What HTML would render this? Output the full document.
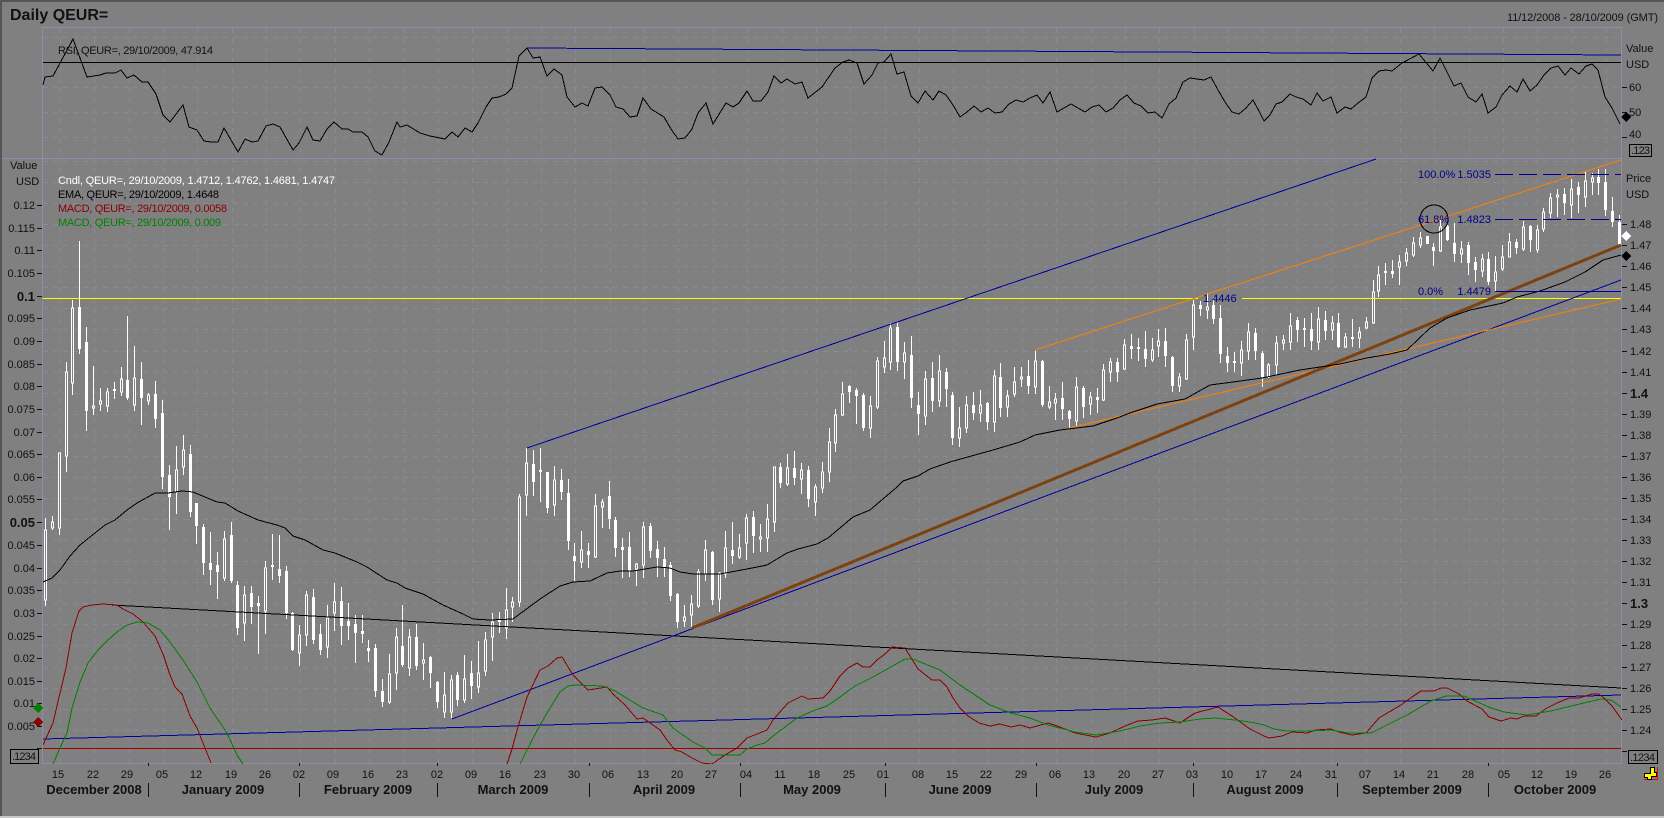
<!DOCTYPE html>
<html><head><meta charset="utf-8"><title>Daily QEUR=</title>
<style>
html,body{margin:0;padding:0;background:#808080;width:1664px;height:818px;overflow:hidden}
svg{display:block}
text{font-family:"Liberation Sans",Arial,sans-serif;font-size:11px;fill:#111}
.b{font-weight:bold;font-size:13px}
.m{text-anchor:middle}
.e{text-anchor:end}
.n{font-size:11px;fill:#00008b}
</style></head><body>
<svg xmlns="http://www.w3.org/2000/svg" width="1664" height="818" viewBox="0 0 1664 818">
<defs><clipPath id="c"><rect x="43" y="28" width="1579" height="736"/></clipPath></defs>
<rect width="1664" height="818" fill="#808080"/>
<g shape-rendering="crispEdges" fill="none">
<path stroke="#555" stroke-width="2" d="M0 1H1664M1 0V818"/>
<path stroke="#c8c8c8" stroke-width="2" d="M0 817H1664"/>
<path stroke="#8a889c" stroke-dasharray="5 5" d="M60.5 28V763M94.5 28V763M129.5 28V763M163.5 28V763M197.5 28V763M232.5 28V763M266.5 28V763M300.5 28V763M335.5 28V763M369.5 28V763M404.5 28V763M438.5 28V763M472.5 28V763M507.5 28V763M541.5 28V763M575.5 28V763M610.5 28V763M644.5 28V763M678.5 28V763M713.5 28V763M747.5 28V763M782.5 28V763M816.5 28V763M850.5 28V763M885.5 28V763M919.5 28V763M953.5 28V763M988.5 28V763M1022.5 28V763M1056.5 28V763M1091.5 28V763M1125.5 28V763M1159.5 28V763M1194.5 28V763M1228.5 28V763M1262.5 28V763M1297.5 28V763M1331.5 28V763M1366.5 28V763M1400.5 28V763M1434.5 28V763M1469.5 28V763M1503.5 28V763M1537.5 28V763M1572.5 28V763M1606.5 28V763"/>
<path stroke="#8a889c" stroke-dasharray="5 5" d="M43 37.5H1621M43 87.5H1621M43 112.5H1621M43 137.5H1621M43 161.5H1621M43 182.5H1621M43 203.5H1621M43 224.5H1621M43 245.5H1621M43 266.5H1621M43 287.5H1621M43 308.5H1621M43 329.5H1621M43 351.5H1621M43 372.5H1621M43 393.5H1621M43 414.5H1621M43 435.5H1621M43 456.5H1621M43 477.5H1621M43 498.5H1621M43 519.5H1621M43 540.5H1621M43 561.5H1621M43 582.5H1621M43 603.5H1621M43 624.5H1621M43 645.5H1621M43 667.5H1621M43 688.5H1621M43 709.5H1621M43 730.5H1621"/>
<path stroke="#8f8dab" d="M42.5 27.5H1621.5V763.5H42.5ZM2 158.5H1621.5"/>
<!-- axis ticks -->
<path stroke="#111" d="M37 205.5h5M37 228.5h5M37 250.5h5M37 273.5h5M37 296.5h5M37 318.5h5M37 341.5h5M37 364.5h5M37 386.5h5M37 409.5h5M37 432.5h5M37 454.5h5M37 477.5h5M37 499.5h5M37 522.5h5M37 545.5h5M37 568.5h5M37 590.5h5M37 613.5h5M37 636.5h5M37 658.5h5M37 681.5h5M37 703.5h5M37 726.5h5M37 748.5h5"/>
<path stroke="#111" d="M1622 87.5h5M1622 112.5h5M1622 137.5h5M1622 224.5h5M1622 245.5h5M1622 266.5h5M1622 287.5h5M1622 308.5h5M1622 329.5h5M1622 351.5h5M1622 372.5h5M1622 393.5h5M1622 414.5h5M1622 435.5h5M1622 456.5h5M1622 477.5h5M1622 498.5h5M1622 519.5h5M1622 540.5h5M1622 561.5h5M1622 582.5h5M1622 603.5h5M1622 624.5h5M1622 645.5h5M1622 667.5h5M1622 688.5h5M1622 709.5h5M1622 730.5h5M1622 751.5h5"/>
<path stroke="#111" d="M148.5 763v3M299.5 763v3M437.5 763v3M589.5 763v3M740.5 763v3M885.5 763v3M1036.5 763v3M1193.5 763v3M1337.5 763v3M1488.5 763v3"/>
<path stroke="#111" d="M148.5 783V797M299.5 783V797M437.5 783V797M589.5 783V797M740.5 783V797M885.5 783V797M1036.5 783V797M1193.5 783V797M1337.5 783V797M1488.5 783V797"/>
<!-- candle wicks -->
<path stroke="#fff" d="M45.5 518V606M52.5 516V530M59.5 453V535M66.5 362V472M72.5 300V395M79.5 241V354M86.5 327V431M93.5 366V415M100.5 388V411M107.5 388V412M114.5 382V399M121.5 367V396M127.5 316V400M134.5 346V411M141.5 362V425M148.5 393V405M155.5 381V428M162.5 400V489M169.5 465V530M176.5 446V514M183.5 435V475M190.5 445V517M196.5 503V544M203.5 524V575M210.5 532V585M217.5 552V599M224.5 531V581M231.5 522V583M237.5 581V635M244.5 586V641M251.5 586V624M258.5 596V654M265.5 561V634M272.5 534V580M279.5 535V583M286.5 566V619M292.5 612V651M299.5 625V666M306.5 591V646M313.5 589V644M320.5 624V655M327.5 605V658M334.5 583V631M341.5 587V645M348.5 603V640M355.5 615V663M362.5 615V643M368.5 640V662M375.5 644V697M382.5 679V707M389.5 654V704M396.5 628V690M402.5 605V667M409.5 629V676M416.5 624V670M423.5 643V680M430.5 656V688M437.5 681V708M444.5 672V718M451.5 675V718M457.5 672V706M464.5 655V703M471.5 661V699M478.5 641V693M485.5 632V676M492.5 613V661M499.5 612V633M506.5 588V639M512.5 597V622M519.5 494V607M526.5 448V516M533.5 450V496M540.5 448V502M547.5 472V513M554.5 466V516M561.5 469V500M568.5 479V550M574.5 543V581M581.5 531V568M588.5 543V568M595.5 494V558M602.5 499V528M609.5 481V529M615.5 517V557M622.5 538V578M629.5 532V577M636.5 563V586M643.5 522V578M650.5 523V558M657.5 541V577M664.5 547V577M670.5 562V601M677.5 593V628M684.5 605V627M691.5 595V627M698.5 569V608M705.5 540V581M712.5 551V605M719.5 572V612M725.5 531V578M732.5 522V564M739.5 534V559M746.5 514V560M753.5 511V553M760.5 524V552M767.5 504V552M774.5 467V532M780.5 463V488M787.5 454V486M794.5 451V485M801.5 463V494M808.5 466V507M815.5 484V516M822.5 462V493M829.5 428V482M835.5 409V452M842.5 382V416M849.5 385V403M856.5 388V424M863.5 393V431M870.5 396V438M877.5 357V409M884.5 341V373M890.5 323V370M897.5 322V371M904.5 342V379M911.5 336V408M918.5 392V435M925.5 371V425M932.5 362V412M939.5 355V407M946.5 368V407M952.5 392V445M959.5 407V447M966.5 396V433M973.5 392V420M980.5 390V422M987.5 402V430M994.5 370V432M1000.5 363V417M1007.5 390V417M1014.5 367V397M1021.5 367V387M1028.5 360V394M1035.5 351V394M1042.5 360V407M1049.5 386V409M1055.5 393V420M1062.5 382V420M1069.5 410V428M1076.5 377V426M1083.5 386V418M1090.5 392V415M1097.5 388V413M1103.5 364V401M1110.5 358V382M1117.5 358V382M1124.5 339V370M1131.5 334V359M1138.5 338V361M1145.5 331V367M1152.5 338V362M1158.5 329V357M1165.5 328V367M1172.5 356V392M1179.5 373V392M1186.5 334V380M1193.5 300V350M1200.5 301V316M1207.5 293V319M1213.5 297V324M1220.5 305V363M1227.5 347V372M1234.5 352V372M1241.5 341V376M1248.5 323V360M1255.5 328V360M1262.5 351V387M1268.5 363V378M1276.5 336V375M1283.5 335V350M1290.5 313V350M1297.5 317V342M1304.5 318V347M1311.5 313V350M1318.5 307V350M1325.5 311V340M1332.5 316V340M1338.5 313V348M1345.5 333V348M1352.5 319V347M1359.5 327V348M1366.5 317V329M1373.5 280V324M1378.5 266V297M1385.5 263V285M1392.5 260V278M1399.5 255V285M1406.5 248V266M1413.5 237V257M1420.5 232V248M1427.5 236V244M1433.5 243V266M1440.5 220V252M1447.5 225V241M1454.5 223V262M1461.5 241V263M1468.5 242V275M1475.5 257V282M1482.5 254V277M1488.5 252V285M1495.5 256V292M1502.5 245V271M1509.5 233V257M1516.5 239V254M1523.5 221V251M1530.5 225V252M1537.5 225V253M1543.5 208V232M1550.5 193V218M1557.5 189V217M1564.5 188V215M1571.5 179V218M1578.5 182V213M1585.5 172V207M1592.5 173V195M1598.5 169V195M1605.5 169V216M1612.5 197V227M1619.5 215V247"/>
<!-- filled bodies -->
<path stroke="#fff" stroke-width="3" d="M79.5 307V349M86.5 342V411M114.5 389V391M127.5 380V398M141.5 379V398M155.5 394V419M162.5 413V477M169.5 475V497M190.5 454V512M196.5 503V526M203.5 527V563M210.5 563V570M217.5 565V572M231.5 535V581M237.5 585V628M251.5 593V607M258.5 603V606M272.5 565V567M279.5 569V576M286.5 571V613M292.5 613V650M313.5 597V640M320.5 634V650M341.5 601V626M348.5 621V626M355.5 624V633M362.5 631V634M368.5 648V651M375.5 648V691M382.5 691V702M402.5 646V665M416.5 637V666M430.5 657V673M437.5 682V702M457.5 675V700M471.5 673V686M499.5 620V622M533.5 464V482M540.5 470V472M547.5 472V508M561.5 480V492M568.5 493V541M574.5 556V561M588.5 551V555M609.5 496V519M615.5 520V548M622.5 547V550M629.5 547V571M650.5 526V551M657.5 549V558M664.5 559V567M670.5 565V596M677.5 594V622M712.5 552V600M732.5 550V556M753.5 517V536M780.5 467V483M794.5 468V478M808.5 470V499M849.5 386V392M856.5 390V396M863.5 395V428M897.5 327V362M911.5 355V398M918.5 405V414M932.5 378V401M946.5 372V389M952.5 395V438M973.5 405V413M987.5 403V422M1000.5 377V408M1028.5 376V386M1042.5 361V405M1062.5 398V409M1069.5 411V419M1083.5 388V407M1097.5 397V400M1117.5 362V372M1131.5 346V349M1138.5 347V349M1145.5 349V359M1165.5 341V356M1172.5 357V386M1200.5 305V309M1213.5 305V319M1220.5 318V354M1227.5 356V363M1234.5 361V363M1255.5 333V351M1262.5 353V377M1297.5 320V330M1304.5 328V330M1311.5 329V341M1325.5 320V331M1338.5 323V347M1352.5 337V339M1385.5 271V273M1392.5 271V274M1427.5 236V244M1433.5 247V251M1447.5 226V240M1454.5 243V254M1468.5 245V263M1475.5 262V270M1488.5 259V282M1516.5 242V248M1530.5 226V240M1564.5 194V203M1578.5 187V195M1598.5 177V183M1605.5 182V210M1612.5 211V222M1619.5 222V245"/>
<!-- hollow bodies -->
<path stroke="#fff" fill="#808080" d="M44.5 530h2V600h-2ZM51.5 522h2V528h-2ZM58.5 453h2V528h-2ZM65.5 372h2V456h-2ZM71.5 308h2V383h-2ZM92.5 406h2V408h-2ZM99.5 401h2V404h-2ZM106.5 392h2V406h-2ZM120.5 379h2V392h-2ZM133.5 378h2V405h-2ZM147.5 395h2V401h-2ZM175.5 470h2V492h-2ZM182.5 450h2V467h-2ZM223.5 539h2V578h-2ZM243.5 595h2V623h-2ZM264.5 568h2V611h-2ZM298.5 635h2V653h-2ZM305.5 595h2V635h-2ZM326.5 618h2V647h-2ZM333.5 602h2V613h-2ZM388.5 674h2V702h-2ZM395.5 637h2V673h-2ZM408.5 637h2V668h-2ZM422.5 660h2V663h-2ZM443.5 695h2V712h-2ZM450.5 680h2V712h-2ZM463.5 679h2V700h-2ZM477.5 673h2V687h-2ZM484.5 640h2V671h-2ZM491.5 622h2V637h-2ZM505.5 610h2V628h-2ZM511.5 602h2V607h-2ZM518.5 497h2V602h-2ZM525.5 463h2V495h-2ZM553.5 480h2V505h-2ZM580.5 550h2V562h-2ZM594.5 506h2V557h-2ZM601.5 502h2V507h-2ZM635.5 564h2V569h-2ZM642.5 527h2V565h-2ZM683.5 617h2V621h-2ZM690.5 604h2V615h-2ZM697.5 572h2V606h-2ZM704.5 550h2V574h-2ZM718.5 573h2V599h-2ZM724.5 548h2V574h-2ZM738.5 548h2V557h-2ZM745.5 518h2V543h-2ZM759.5 537h2V539h-2ZM766.5 519h2V538h-2ZM773.5 467h2V522h-2ZM786.5 468h2V484h-2ZM800.5 470h2V479h-2ZM814.5 487h2V502h-2ZM821.5 472h2V488h-2ZM828.5 442h2V472h-2ZM834.5 415h2V443h-2ZM841.5 394h2V415h-2ZM869.5 406h2V428h-2ZM876.5 361h2V407h-2ZM883.5 358h2V367h-2ZM889.5 328h2V362h-2ZM903.5 353h2V362h-2ZM924.5 379h2V416h-2ZM938.5 371h2V401h-2ZM958.5 428h2V438h-2ZM965.5 405h2V428h-2ZM979.5 405h2V413h-2ZM993.5 376h2V422h-2ZM1006.5 396h2V407h-2ZM1013.5 382h2V394h-2ZM1020.5 377h2V379h-2ZM1034.5 361h2V387h-2ZM1048.5 402h2V407h-2ZM1054.5 399h2V403h-2ZM1075.5 387h2V421h-2ZM1089.5 397h2V404h-2ZM1102.5 370h2V400h-2ZM1109.5 362h2V372h-2ZM1123.5 345h2V369h-2ZM1151.5 350h2V360h-2ZM1157.5 341h2V346h-2ZM1178.5 377h2V386h-2ZM1185.5 340h2V379h-2ZM1192.5 305h2V337h-2ZM1206.5 307h2V310h-2ZM1240.5 350h2V363h-2ZM1247.5 332h2V351h-2ZM1267.5 365h2V377h-2ZM1275.5 343h2V365h-2ZM1282.5 340h2V343h-2ZM1289.5 326h2V342h-2ZM1317.5 319h2V342h-2ZM1331.5 323h2V330h-2ZM1344.5 337h2V347h-2ZM1358.5 332h2V338h-2ZM1365.5 322h2V328h-2ZM1372.5 292h2V323h-2ZM1377.5 275h2V291h-2ZM1398.5 262h2V267h-2ZM1405.5 253h2V261h-2ZM1412.5 243h2V255h-2ZM1419.5 238h2V245h-2ZM1439.5 227h2V251h-2ZM1460.5 249h2V254h-2ZM1481.5 259h2V271h-2ZM1494.5 272h2V281h-2ZM1501.5 257h2V269h-2ZM1508.5 242h2V257h-2ZM1522.5 227h2V249h-2ZM1536.5 230h2V250h-2ZM1542.5 212h2V229h-2ZM1549.5 198h2V213h-2ZM1556.5 195h2V197h-2ZM1570.5 189h2V205h-2ZM1584.5 181h2V197h-2ZM1591.5 178h2V182h-2Z"/>
<!-- RSI -->
<polyline stroke="#000" points="43,85 45,77 53,76 73,39 87,77 100,75 106,73 115,73 121,70 127,78 134,75 142,82 148,82 156,94 163,115 170,122 183,105 189,127 197,130 204,141 211,142 218,142 224,128 238,152 245,139 252,142 258,141 266,126 273,124 280,127 293,150 299,143 307,127 313,140 320,141 327,129 334,122 342,129 348,129 353,132 362,132 368,137 375,151 382,155 389,142 397,122 400,127 407,125 420,133 430,136 440,138 445,139 452,132 458,137 465,128 472,132 478,123 486,107 492,98 499,97 506,94 512,88 519,56 527,48 533,58 540,57 547,76 554,69 562,75 567,97 575,107 582,103 588,106 595,88 602,87 610,95 616,107 623,109 630,117 637,116 643,98 651,109 664,117 671,129 678,139 685,138 692,129 698,113 706,103 713,124 726,103 733,107 739,103 747,91 753,101 761,101 768,92 774,76 781,83 787,79 795,84 802,82 808,98 822,87 835,68 843,62 849,60 857,63 864,84 872,75 878,63 884,62 891,54 897,74 904,72 911,96 918,103 925,91 933,100 939,91 946,95 953,105 960,117 967,112 974,106 981,112 988,108 995,113 1002,112 1009,104 1016,100 1023,102 1030,98 1037,95 1043,103 1050,92 1057,112 1064,108 1071,104 1078,108 1085,112 1092,107 1099,105 1106,112 1113,108 1120,100 1127,95 1134,103 1141,106 1148,113 1155,112 1162,118 1169,104 1176,98 1183,82 1190,78 1197,79 1204,80 1211,77 1218,90 1225,102 1232,112 1239,114 1246,108 1253,100 1260,113 1264,121 1270,115 1276,104 1282,102 1290,94 1296,97 1303,99 1311,105 1317,93 1323,101 1331,97 1337,113 1345,107 1351,109 1358,103 1366,97 1372,78 1379,71 1386,70 1392,71 1402,63 1419,54 1433,71 1440,58 1454,86 1461,83 1468,97 1476,102 1482,94 1488,113 1496,107 1502,95 1510,86 1517,92 1523,79 1530,91 1537,85 1544,75 1551,68 1558,66 1565,75 1571,68 1579,74 1586,66 1592,64 1598,70 1605,97 1612,108 1620,124"/>
<path stroke="#000" d="M43 62.5H1621"/>
<path stroke="#0000a0" d="M527 48L1621 55"/>
<!-- yellow line -->
<path stroke="#ff0" d="M43 298.5H1198M1242 298.5H1621"/>
<!-- trend lines -->
<path stroke="#000" d="M112 605L1621 688"/>
<path stroke="#0000a0" d="M43 739L1621 695"/>
<path stroke="#0000a0" d="M527 448L1376 159"/>
<path stroke="#0000a0" d="M452 719L1621 280"/>
<path stroke="#ff8000" d="M1035 350L1621 160"/>
<path stroke="#ff8000" d="M1069 428L1621 299"/>
<path stroke="#7c4212" stroke-width="3" d="M692 628L1621 245"/>
<path stroke="#a00000" stroke-width="1" d="M43 748.5H1621"/>
<!-- EMA -->
<polyline stroke="#000" points="43,582 52,578 60,570 70,556 80,545 95,533 105,525 115,520 127,510 137,503 155,493 168,493 182,491 193,492 217,502 225,503 238,511 258,520 277,525 285,528 293,536 305,540 323,550 335,553 357,562 367,567 387,580 397,583 405,588 423,594 443,605 463,614 473,619 490,620 513,619 540,599 560,586 573,582 590,581 607,573 620,571 633,571 657,567 670,568 680,572 693,574 720,574 747,569 767,565 787,553 798,549 817,544 828,538 853,517 870,510 897,487 903,481 918,476 930,469 950,462 975,455 993,450 1020,442 1035,435 1060,430 1093,426 1117,418 1130,413 1157,404 1185,399 1210,385 1233,382 1262,378 1300,370 1340,364 1367,358 1390,354 1407,350 1430,328 1447,318 1470,310 1503,303 1517,297 1540,291 1565,282 1585,272 1603,260 1621,255"/>
<g clip-path="url(#c)">
<polyline stroke="#8b0000" points="43,745 53,723 60,693 66,668 72,633 79,611 83,607 92,605 103,604 117,605 123,609 133,614 143,622 155,636 163,654 170,675 175,687 182,694 190,716 197,728 203,743 211,763"/>
<polyline stroke="#8b0000" points="507,764 512,749 518,727 527,697 540,670 548,666 557,658 562,657 573,675 588,690 607,687 613,694 625,705 637,719 643,718 660,730 667,740 675,750 682,752 692,758 702,763 712,764 722,757 730,752 737,748 747,738 767,730 773,720 780,712 788,703 802,696 808,699 823,698 830,691 840,676 848,668 857,663 863,667 870,667 877,660 885,654 892,647 905,648 918,669 932,680 940,680 947,687 953,698 960,708 968,716 979,723 990,726 1000,724 1011,727 1020,725 1030,728 1048,723 1060,727 1075,733 1096,737 1110,733 1125,726 1138,721 1152,720 1165,718 1180,723 1195,713 1218,707 1232,716 1250,729 1264,736 1269,738 1282,736 1292,732 1307,733 1316,730 1331,729 1339,732 1352,735 1366,733 1379,718 1389,712 1401,705 1412,697 1421,691 1434,691 1441,688 1447,688 1459,694 1467,701 1482,709 1489,717 1501,721 1511,718 1517,719 1524,716 1536,716 1547,708 1557,703 1569,698 1579,698 1592,694 1599,694 1604,698 1612,706 1622,720"/>
<polyline stroke="#008000" points="53,764 60,748 67,733 72,708 80,682 88,663 98,650 107,641 117,632 127,625 137,622 148,623 160,630 170,642 183,660 197,682 210,708 227,733 237,755 243,764"/>
<polyline stroke="#008000" points="520,764 528,748 540,725 550,708 560,692 568,686 575,685 603,686 615,691 643,708 663,715 673,728 693,742 705,748 712,755 740,755 747,749 757,745 765,743 773,736 797,718 815,710 827,706 840,697 855,686 873,677 905,659 913,659 940,670 960,685 975,695 990,705 1011,713 1030,718 1048,725 1075,732 1096,735 1120,731 1140,726 1160,723 1180,722 1200,719 1215,718 1235,720 1250,722 1264,725 1274,729 1287,731 1307,731 1331,730 1349,733 1371,733 1407,715 1431,701 1446,696 1464,696 1491,708 1504,712 1527,715 1551,711 1571,706 1601,699 1611,700 1621,707"/>
</g>
<!-- fibonacci -->
<path stroke="#00008b" stroke-dasharray="18 6" d="M1495 174.5H1621M1495 219.5H1621"/>
<path stroke="#00008b" d="M1495 291.5H1621"/>
<circle cx="1434" cy="219" r="14" stroke="#000"/>
<!-- boxes -->
<rect x="1629.5" y="144.5" width="22" height="12" stroke="#000"/>
<rect x="10.5" y="749.5" width="28" height="14" stroke="#000"/>
<rect x="1628.5" y="750.5" width="29" height="13" stroke="#000"/>
<!-- diamonds -->
<polygon fill="#008000" points="38,703 43,708 38,713 33,708"/>
<polygon fill="#8b0000" points="38,717 43,722 38,727 33,722"/>
<polygon fill="#000" points="1626,112 1631,117 1626,122 1621,117"/>
<polygon fill="#fff" points="1626,231 1631,236 1626,241 1621,236"/>
<polygon fill="#000" points="1626,251 1631,256 1626,261 1621,256"/>
<!-- icon -->
<path stroke="#f00" d="M1657.5 767V779.5H1644"/>
<path fill="#ff0" stroke="#000" d="M1647.5 773.5h3v-6h4v5h2v4h-5v3h-4v-2h-3v-4z"/>
</g>
<!-- titles -->
<text x="10" y="20" style="font-size:16px;font-weight:bold">Daily QEUR=</text>
<text x="1507" y="21" textLength="151">11/12/2008 - 28/10/2009 (GMT)</text>
<text x="58" y="54" textLength="155">RSI, QEUR=, 29/10/2009, 47.914</text>
<text x="58" y="184" textLength="277" style="fill:#fff">Cndl, QEUR=, 29/10/2009, 1.4712, 1.4762, 1.4681, 1.4747</text>
<text x="58" y="198" textLength="161" style="fill:#000">EMA, QEUR=, 29/10/2009, 1.4648</text>
<text x="58" y="212" textLength="169" style="fill:#8b0000">MACD, QEUR=, 29/10/2009, 0.0058</text>
<text x="58" y="226" textLength="163" style="fill:#008000">MACD, QEUR=, 29/10/2009, 0.009</text>
<!-- left axis -->
<text x="10" y="169">Value</text><text x="16" y="185">USD</text>
<g class="e" style="text-anchor:end">
<text x="35" y="209">0.12</text><text x="35" y="232">0.115</text><text x="35" y="254">0.11</text><text x="35" y="277">0.105</text>
<text x="35" y="301" class="b">0.1</text>
<text x="35" y="322">0.095</text><text x="35" y="345">0.09</text><text x="35" y="368">0.085</text><text x="35" y="390">0.08</text><text x="35" y="413">0.075</text><text x="35" y="436">0.07</text><text x="35" y="458">0.065</text><text x="35" y="481">0.06</text><text x="35" y="503">0.055</text>
<text x="35" y="527" class="b">0.05</text>
<text x="35" y="549">0.045</text><text x="35" y="572">0.04</text><text x="35" y="594">0.035</text><text x="35" y="617">0.03</text><text x="35" y="640">0.025</text><text x="35" y="662">0.02</text><text x="35" y="685">0.015</text><text x="35" y="707">0.01</text><text x="35" y="730">0.005</text>
</g>
<text x="12" y="760" textLength="24">.1234</text>
<!-- right axis -->
<text x="1626" y="52">Value</text><text x="1626" y="68">USD</text>
<text x="1629" y="91">60</text><text x="1629" y="116">50</text><text x="1629" y="138">40</text>
<text x="1631" y="154" textLength="19">.123</text>
<text x="1626" y="182">Price</text><text x="1626" y="198">USD</text>
<text x="1630" y="228">1.48</text><text x="1630" y="249">1.47</text><text x="1630" y="270">1.46</text><text x="1630" y="291">1.45</text><text x="1630" y="312">1.44</text><text x="1630" y="333">1.43</text><text x="1630" y="355">1.42</text><text x="1630" y="376">1.41</text>
<text x="1630" y="398" class="b">1.4</text>
<text x="1630" y="418">1.39</text><text x="1630" y="439">1.38</text><text x="1630" y="460">1.37</text><text x="1630" y="481">1.36</text><text x="1630" y="502">1.35</text><text x="1630" y="523">1.34</text><text x="1630" y="544">1.33</text><text x="1630" y="565">1.32</text><text x="1630" y="586">1.31</text>
<text x="1630" y="608" class="b">1.3</text>
<text x="1630" y="628">1.29</text><text x="1630" y="649">1.28</text><text x="1630" y="671">1.27</text><text x="1630" y="692">1.26</text><text x="1630" y="713">1.25</text><text x="1630" y="734">1.24</text>
<text x="1630" y="761" textLength="25">.1234</text>
<!-- fib text -->
<text x="1418" y="178" class="n">100.0%</text><text x="1491" y="178" class="n e">1.5035</text>
<text x="1418" y="223" class="n">61.8%</text><text x="1491" y="223" class="n e">1.4823</text>
<text x="1418" y="295" class="n">0.0%</text><text x="1491" y="295" class="n e">1.4479</text>
<text x="1203" y="302" class="n">1.4446</text>
<!-- dates -->
<g style="text-anchor:middle">
<text x="58" y="778">15</text><text x="93" y="778">22</text><text x="127" y="778">29</text><text x="162" y="778">05</text><text x="196" y="778">12</text><text x="231" y="778">19</text><text x="265" y="778">26</text><text x="299" y="778">02</text><text x="333" y="778">09</text><text x="368" y="778">16</text><text x="402" y="778">23</text><text x="437" y="778">02</text><text x="471" y="778">09</text><text x="505" y="778">16</text><text x="540" y="778">23</text><text x="574" y="778">30</text><text x="608" y="778">06</text><text x="643" y="778">13</text><text x="677" y="778">20</text><text x="711" y="778">27</text><text x="746" y="778">04</text><text x="780" y="778">11</text><text x="814" y="778">18</text><text x="849" y="778">25</text><text x="883" y="778">01</text><text x="918" y="778">08</text><text x="952" y="778">15</text><text x="986" y="778">22</text><text x="1021" y="778">29</text><text x="1055" y="778">06</text><text x="1089" y="778">13</text><text x="1124" y="778">20</text><text x="1158" y="778">27</text><text x="1192" y="778">03</text><text x="1227" y="778">10</text><text x="1261" y="778">17</text><text x="1296" y="778">24</text><text x="1331" y="778">31</text><text x="1365" y="778">07</text><text x="1399" y="778">14</text><text x="1433" y="778">21</text><text x="1468" y="778">28</text><text x="1504" y="778">05</text><text x="1537" y="778">12</text><text x="1571" y="778">19</text><text x="1605" y="778">26</text>
<text x="94" y="794" class="b">December 2008</text>
<text x="223" y="794" class="b">January 2009</text>
<text x="368" y="794" class="b">February 2009</text>
<text x="513" y="794" class="b">March 2009</text>
<text x="664" y="794" class="b">April 2009</text>
<text x="812" y="794" class="b">May 2009</text>
<text x="960" y="794" class="b">June 2009</text>
<text x="1114" y="794" class="b">July 2009</text>
<text x="1265" y="794" class="b">August 2009</text>
<text x="1412" y="794" class="b">September 2009</text>
<text x="1555" y="794" class="b">October 2009</text>
</g>
</svg>
</body></html>
